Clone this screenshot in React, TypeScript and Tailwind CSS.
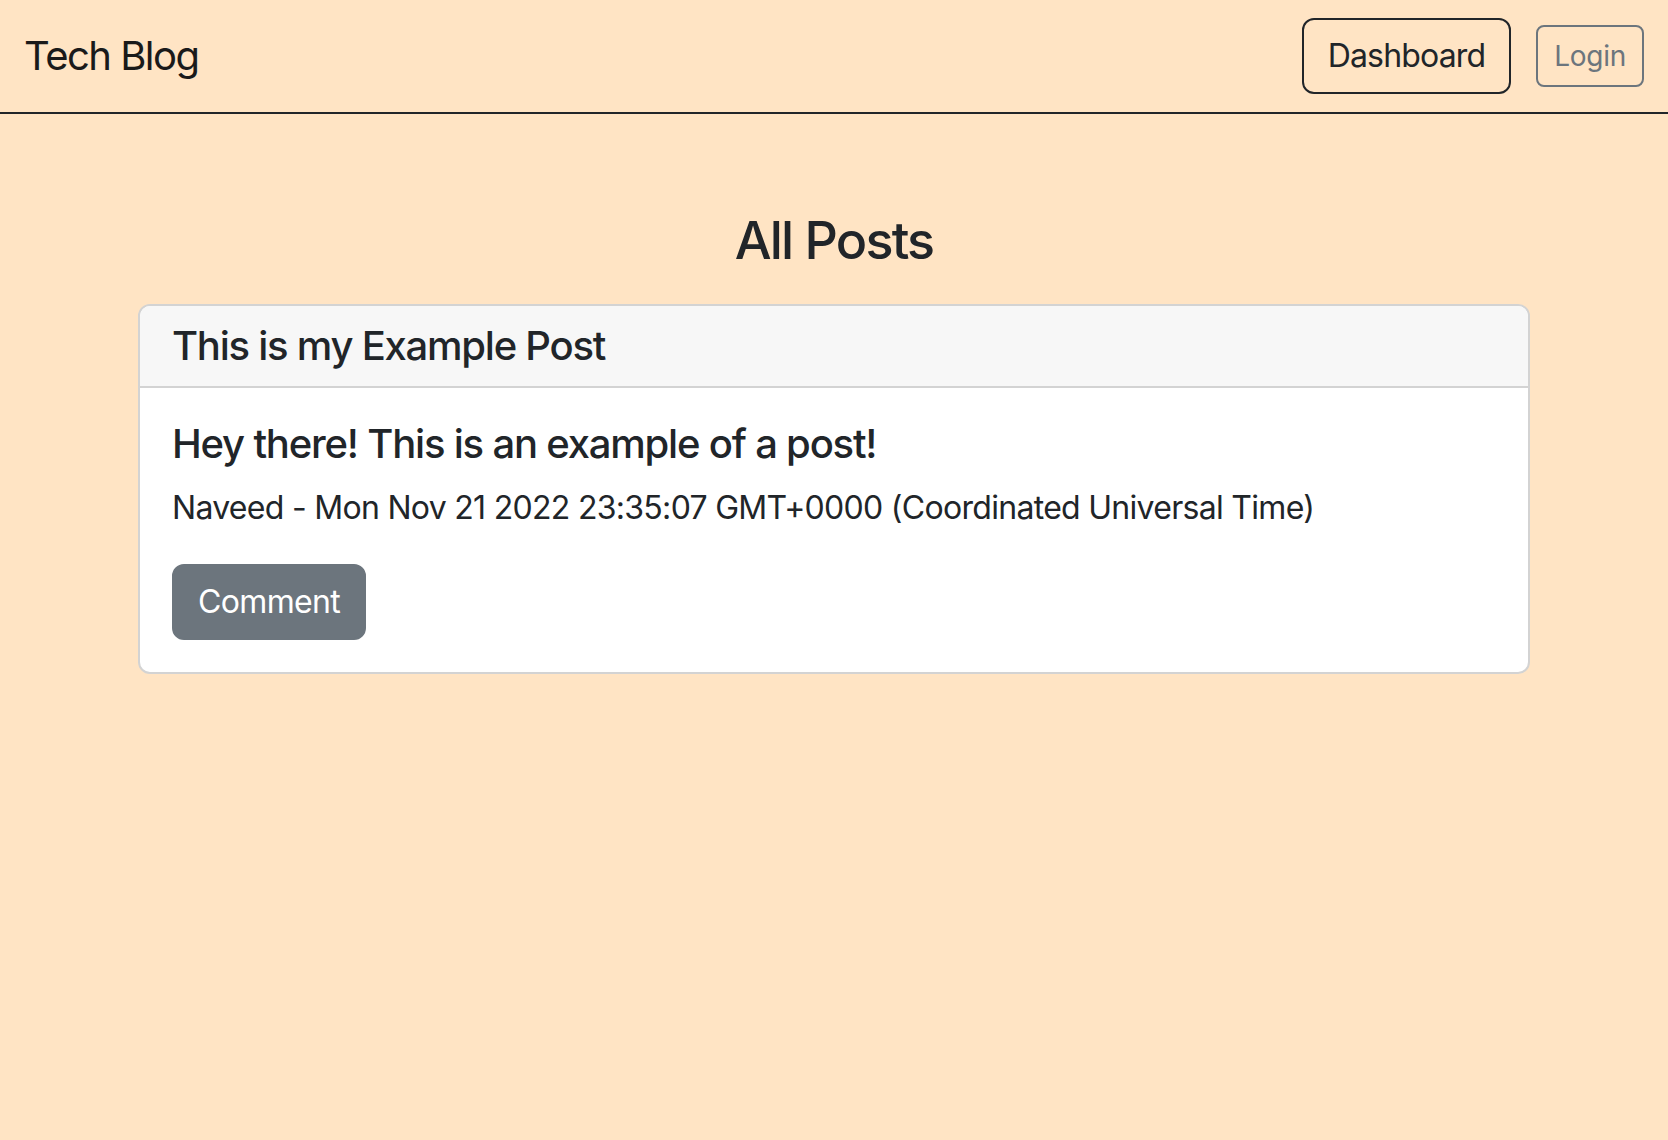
export default function App() {
  return (
    <div className="min-h-screen bg-[#ffe4c4] text-[#212529]" style={{ fontFamily: 'Inter, "Noto Sans", sans-serif' }}>
      <nav className="flex items-center justify-between border-b-2 border-[#212529] px-6 py-4">
        <a className="py-[10px] text-[40px] leading-[60px] tracking-[-0.038em] text-[#1a1a1a]">Tech Blog</a>
        <div className="flex items-center gap-[25px]">
          <button className="rounded-[12px] border-2 border-[#212529] px-6 py-3 text-[32px] leading-[48px] tracking-[-0.026em] text-[#212529]">
            Dashboard
          </button>
          <button className="rounded-[8px] border-2 border-[#6c757d] px-4 py-2 text-[28px] leading-[42px] tracking-[-0.01em] text-[#6c757d]">
            Login
          </button>
        </div>
      </nav>

      <main className="mx-auto w-[1392px]">
        <h3 className="mb-8 mt-24 text-center text-[52px] font-medium leading-[1.2] tracking-[-0.034em]">All Posts</h3>

        <div className="overflow-hidden rounded-[12px] border-2 border-[#d3d3d3] bg-white">
          <div className="border-b-2 border-[#d3d3d3] bg-[#f7f7f7] px-8 py-4">
            <h5 className="text-[40px] font-medium leading-[48px] tracking-[-0.031em]">This is my Example Post</h5>
          </div>
          <div className="p-8">
            <h5 className="mb-4 text-[40px] font-medium leading-[48px] tracking-[-0.03em]">
              Hey there! This is an example of a post!
            </h5>
            <p className="mb-8 text-[32px] leading-[48px] tracking-[-0.022em]">
              Naveed - Mon Nov 21 2022 23:35:07 GMT+0000 (Coordinated Universal Time)
            </p>
            <button className="rounded-[12px] border-2 border-[#6c757d] bg-[#6c757d] px-6 py-3 text-[32px] leading-[48px] tracking-[-0.02em] text-white">
              Comment
            </button>
          </div>
        </div>
      </main>
    </div>
  )
}
